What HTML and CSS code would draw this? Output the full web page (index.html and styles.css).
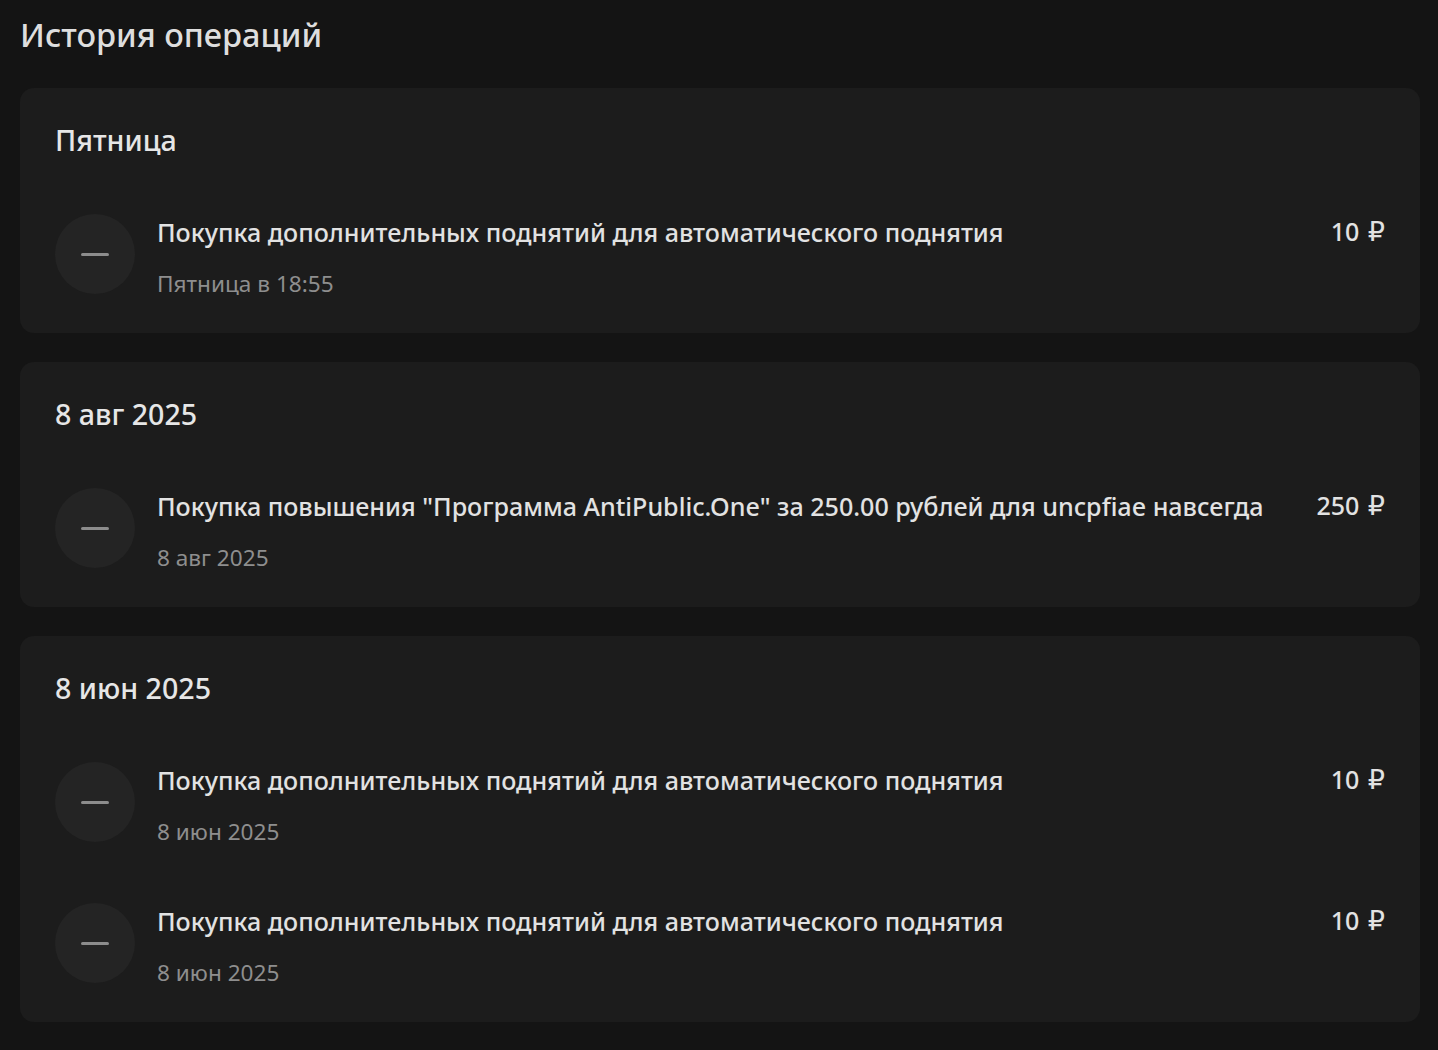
FILE: index.html
```html
<!DOCTYPE html>
<html lang="ru">
<head>
<meta charset="utf-8">
<title>История операций</title>
<link rel="stylesheet" href="styles.css">
</head>
<body>
<main class="page">
  <h1 class="page-title">История операций</h1>

  <section class="card">
    <h2 class="card-date">Пятница</h2>
    <div class="rows">
      <div class="op">
        <div class="op-icon"><span class="minus"></span></div>
        <div class="op-info">
          <div class="op-title">Покупка дополнительных поднятий для автоматического поднятия</div>
          <div class="op-time">Пятница в 18:55</div>
        </div>
        <div class="op-sum">10 <span class="cur">₽</span></div>
      </div>
    </div>
  </section>

  <section class="card">
    <h2 class="card-date">8 авг 2025</h2>
    <div class="rows">
      <div class="op">
        <div class="op-icon"><span class="minus"></span></div>
        <div class="op-info">
          <div class="op-title">Покупка повышения "Программа AntiPublic.One" за 250.00 рублей для uncpfiae навсегда</div>
          <div class="op-time">8 авг 2025</div>
        </div>
        <div class="op-sum">250 <span class="cur">₽</span></div>
      </div>
    </div>
  </section>

  <section class="card">
    <h2 class="card-date">8 июн 2025</h2>
    <div class="rows">
      <div class="op">
        <div class="op-icon"><span class="minus"></span></div>
        <div class="op-info">
          <div class="op-title">Покупка дополнительных поднятий для автоматического поднятия</div>
          <div class="op-time">8 июн 2025</div>
        </div>
        <div class="op-sum">10 <span class="cur">₽</span></div>
      </div>
      <div class="op">
        <div class="op-icon"><span class="minus"></span></div>
        <div class="op-info">
          <div class="op-title">Покупка дополнительных поднятий для автоматического поднятия</div>
          <div class="op-time">8 июн 2025</div>
        </div>
        <div class="op-sum">10 <span class="cur">₽</span></div>
      </div>
    </div>
  </section>
</main>
</body>
</html>
```

FILE: styles.css
```css
* { box-sizing: border-box; }

html, body {
  margin: 0;
  padding: 0;
  background: #141414;
}

body {
  font-family: "Noto Sans", "Open Sans", sans-serif;
  color: #e2e2e2;
}

.page {
  padding: 18px 18px 20px 20px;
  display: flex;
  flex-direction: column;
  gap: 29px;
}

.page-title {
  margin: 0 0 8px 0;
  font-size: 32.5px;
  line-height: 33px;
  font-weight: 500;
  color: #dedede;
}

.card {
  background: #1c1c1c;
  border-radius: 14px;
  padding: 30px 35px 34px 35px;
}

.card-date {
  margin: 0;
  font-size: 28.6px;
  line-height: 44px;
  font-weight: 500;
  color: #e6e6e6;
}

.rows {
  margin-top: 52px;
  display: flex;
  flex-direction: column;
  gap: 56px;
}

.op {
  display: flex;
  align-items: flex-start;
}

.op-icon {
  flex: 0 0 80px;
  width: 80px;
  height: 80px;
  border-radius: 50%;
  background: #242424;
  display: flex;
  align-items: center;
  justify-content: center;
}

.minus {
  display: block;
  width: 28px;
  height: 3px;
  border-radius: 2px;
  background: #8c8c8c;
}

.op-info {
  flex: 1;
  margin-left: 22px;
  padding-top: 2px;
  display: flex;
  flex-direction: column;
  gap: 21px;
}

.op-title {
  font-size: 25.1px;
  line-height: 32px;
  font-weight: 500;
  color: #e2e2e2;
}

.op-time {
  font-size: 22.6px;
  line-height: 30px;
  color: #8e8e8e;
}

.op-sum {
  margin-left: 40px;
  padding-top: 1px;
  font-size: 25px;
  line-height: 32px;
  font-weight: 500;
  color: #e2e2e2;
  white-space: nowrap;
}

.cur {
  font-family: "DejaVu Sans", sans-serif;
  font-size: 27px;
  line-height: 1;
  font-weight: 400;
  margin-left: 2px;
}
```
